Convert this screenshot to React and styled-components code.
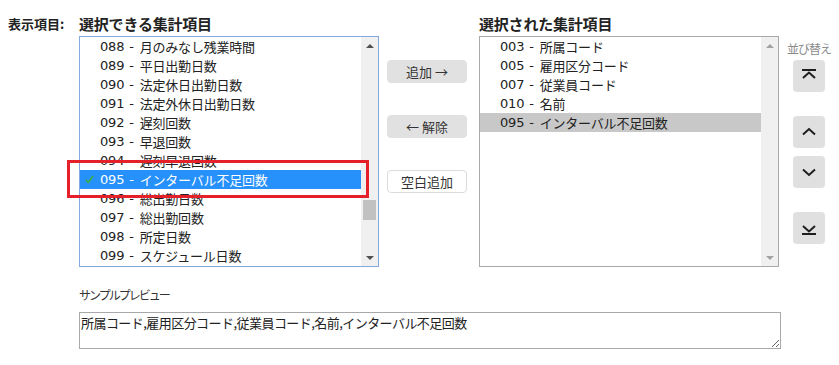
import React from 'react';
import styled, { createGlobalStyle } from 'styled-components';

const available = [
  { code: '088', name: '月のみなし残業時間' },
  { code: '089', name: '平日出勤日数' },
  { code: '090', name: '法定休日出勤日数' },
  { code: '091', name: '法定外休日出勤日数' },
  { code: '092', name: '遅刻回数' },
  { code: '093', name: '早退回数' },
  { code: '094', name: '遅刻早退回数' },
  { code: '095', name: 'インターバル不足回数', checked: true },
  { code: '096', name: '総出勤日数' },
  { code: '097', name: '総出勤回数' },
  { code: '098', name: '所定日数' },
  { code: '099', name: 'スケジュール日数' },
];

const selected = [
  { code: '003', name: '所属コード' },
  { code: '005', name: '雇用区分コード' },
  { code: '007', name: '従業員コード' },
  { code: '010', name: '名前' },
  { code: '095', name: 'インターバル不足回数', active: true },
];

const Global = createGlobalStyle`
  body {
    margin: 0;
    background: #fff;
    color: #222;
    font-family: "DejaVu Sans", "Noto Sans CJK JP", sans-serif;
  }
`;

const Page = styled.div`
  padding: 10px 0 0 8px;
`;

const Top = styled.div`
  display: flex;
  align-items: flex-start;
`;

const FieldLabel = styled.div`
  width: 71px;
  height: 26px;
  display: flex;
  align-items: center;
  font-family: "Noto Sans CJK JP", sans-serif;
  font-weight: 700;
  font-size: 13px;
`;

const Column = styled.div`
  width: 300px;
  display: flex;
  flex-direction: column;
  position: relative;
`;

const Heading = styled.h2`
  margin: 0;
  height: 26px;
  display: flex;
  align-items: center;
  font-family: "Noto Sans CJK JP", sans-serif;
  font-weight: 700;
  font-size: 15px;
  letter-spacing: -0.2px;
`;

const ListBox = styled.div`
  height: 229px;
  display: flex;
  border: 1px solid ${p => (p.$focused ? '#84a9e2' : '#a9a9a9')};
  background: #fff;
  overflow: hidden;
`;

const Items = styled.ul`
  flex: 1;
  margin: 0;
  padding: 0;
  list-style: none;
`;

const Item = styled.li`
  height: 19px;
  display: flex;
  align-items: center;
  padding-left: 5px;
  font-size: 13px;
  letter-spacing: -0.2px;
  white-space: nowrap;
  color: ${p => (p.$highlight ? '#fff' : '#222')};
  background: ${p => (p.$highlight ? '#2690fb' : p.$active ? '#c8c8c8' : 'transparent')};
`;

const CheckSlot = styled.span`
  width: 15px;
  height: 19px;
  display: flex;
  align-items: center;
`;

const Code = styled.span`
  margin-right: 5px;
`;

const Name = styled.span`
  font-family: "Noto Sans CJK JP", sans-serif;
  margin-left: 6px;
`;

const Scrollbar = styled.div`
  width: 17px;
  background: #f0f0f0;
  display: flex;
  flex-direction: column;
  align-items: center;
`;

const Arrow = styled.div`
  height: 17px;
  display: flex;
  align-items: center;
  justify-content: center;
  width: 100%;
  &::before {
    content: '';
    border-left: 4px solid transparent;
    border-right: 4px solid transparent;
    ${p => (p.$down ? 'border-top' : 'border-bottom')}: 4px solid ${p => (p.$disabled ? '#a3a3a3' : '#505050')};
  }
`;

const Track = styled.div`
  flex: 1;
  width: 100%;
  display: flex;
  flex-direction: column;
  align-items: center;
`;

const Thumb = styled.div`
  width: 13px;
  height: 20px;
  background: #c1c1c1;
`;

const Highlight = styled.div`
  position: absolute;
  left: -12px;
  top: 150px;
  width: 302px;
  height: 38px;
  border: 3px solid #e4202a;
  box-sizing: border-box;
  pointer-events: none;
`;

const Actions = styled.div`
  width: 100px;
  padding: 50px 0 0 8px;
  box-sizing: border-box;
  display: flex;
  flex-direction: column;
  gap: 32px;
`;

const ActionButton = styled.button`
  width: 80px;
  height: 23px;
  padding: 0;
  border-radius: 4px;
  border: 1px solid ${p => (p.$outline ? '#dcdcdc' : '#e1e1e1')};
  background: ${p => (p.$outline ? '#fff' : '#e1e1e1')};
  color: #333;
  font-family: "Noto Sans CJK JP", sans-serif;
  font-size: 13px;
  cursor: pointer;
`;

const Sorter = styled.div`
  padding: 26px 0 0 8px;
  display: flex;
  flex-direction: column;
`;

const SortLabel = styled.div`
  font-family: "Noto Sans CJK JP", sans-serif;
  font-size: 12px;
  letter-spacing: -1px;
  color: #8a8a8a;
  height: 24px;
  display: flex;
  align-items: center;
`;

const SortButtons = styled.div`
  margin-left: 6px;
  display: flex;
  flex-direction: column;
`;

const SortButton = styled.button`
  width: 32px;
  height: 32px;
  margin-top: ${p => p.$gap}px;
  padding: 0;
  border: none;
  border-radius: 4px;
  background: #e0e0e0;
  display: flex;
  align-items: center;
  justify-content: center;
  cursor: pointer;
`;

const Preview = styled.div`
  margin: 19px 0 0 71px;
  display: flex;
  flex-direction: column;
`;

const PreviewLabel = styled.div`
  font-family: "Noto Sans CJK JP", sans-serif;
  font-size: 12px;
  letter-spacing: -2px;
  color: #333;
  height: 18px;
  margin-bottom: 8px;
`;

const PreviewBox = styled.textarea`
  width: 702px;
  height: 37px;
  box-sizing: border-box;
  margin: 0;
  padding: 0 1px;
  border: 1px solid #a9a9a9;
  font-family: "Noto Sans CJK JP", sans-serif;
  font-size: 13px;
  letter-spacing: -0.55px;
  line-height: 19px;
  color: #222;
  resize: vertical;
  outline: none;
`;

const SortIcon = ({ kind }) => {
  const paths = {
    top: 'M2 3H16M3 11L9 5.5L15 11',
    up: 'M3 11.5L9 6L15 11.5',
    down: 'M3 6.5L9 12L15 6.5',
    bottom: 'M3 7L9 12.5L15 7M2 15H16',
  };
  return (
    <svg width="18" height="18" viewBox="0 0 18 18" fill="none" stroke="#1e1e1e" strokeWidth="2">
      <path d={paths[kind]} />
    </svg>
  );
};

const CheckMark = () => (
  <svg width="9" height="9" viewBox="0 0 9 9" fill="none" stroke="#3cb043" strokeWidth="1.7">
    <path d="M1 5L3.3 7.5L8 1" />
  </svg>
);

function ItemList({ items, focused, thumbAt }) {
  return (
    <ListBox $focused={focused}>
      <Items>
        {items.map(it => (
          <Item key={it.code} $highlight={it.checked} $active={it.active}>
            <CheckSlot>{it.checked && <CheckMark />}</CheckSlot>
            <Code>{it.code}</Code>-<Name>{it.name}</Name>
          </Item>
        ))}
      </Items>
      <Scrollbar>
        <Arrow $disabled={!focused} />
        <Track>{thumbAt !== undefined && <Thumb style={{ marginTop: thumbAt }} />}</Track>
        <Arrow $down $disabled={!focused} />
      </Scrollbar>
    </ListBox>
  );
}

export default function App() {
  return (
    <Page>
      <Global />
      <Top>
        <FieldLabel>表示項目:</FieldLabel>
        <Column>
          <Heading>選択できる集計項目</Heading>
          <ItemList items={available} focused thumbAt={146} />
          <Highlight />
        </Column>
        <Actions>
          <ActionButton>追加 →</ActionButton>
          <ActionButton>← 解除</ActionButton>
          <ActionButton $outline>空白追加</ActionButton>
        </Actions>
        <Column>
          <Heading>選択された集計項目</Heading>
          <ItemList items={selected} />
        </Column>
        <Sorter>
          <SortLabel>並び替え</SortLabel>
          <SortButtons>
            <SortButton $gap={0}><SortIcon kind="top" /></SortButton>
            <SortButton $gap={24}><SortIcon kind="up" /></SortButton>
            <SortButton $gap={8}><SortIcon kind="down" /></SortButton>
            <SortButton $gap={24}><SortIcon kind="bottom" /></SortButton>
          </SortButtons>
        </Sorter>
      </Top>
      <Preview>
        <PreviewLabel>サンプルプレビュー</PreviewLabel>
        <PreviewBox readOnly value="所属コード,雇用区分コード,従業員コード,名前,インターバル不足回数" />
      </Preview>
    </Page>
  );
}
